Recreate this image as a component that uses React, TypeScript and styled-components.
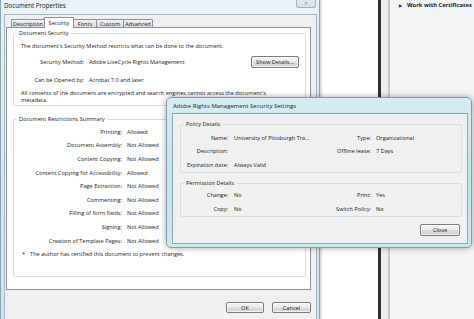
import React from "react";
import styled, { createGlobalStyle } from "styled-components";

const GlobalStyle = createGlobalStyle`
  html, body {
    margin: 0;
    padding: 0;
  }
  body {
    width: 474px;
    height: 319px;
    overflow: hidden;
    font-family: "Open Sans", "Liberation Sans", sans-serif;
    font-size: 5.6px;
    color: #1a1a1a;
  }
`;

const Desktop = styled.div`
  position: relative;
  width: 474px;
  height: 319px;
  overflow: hidden;
  display: flex;
  background: #ffffff;
`;

/* the Acrobat window behind the dialogs */
const PageArea = styled.div`
  flex: 0 0 378px;
  background: #ffffff;
`;

const PageEdge = styled.div`
  flex: 0 0 3px;
  background: #2e2e2e;
`;

const Gutter = styled.div`
  flex: 0 0 7px;
  background: #efefef;
  border-right: 2px solid #c8c8c8;
`;

const SidePanel = styled.div`
  flex: 1;
  background: #f3f3f3;
  padding: 1px 0 0 9px;
`;

const SideItem = styled.div`
  display: flex;
  align-items: center;
  gap: 5px;
  height: 8px;
  font-weight: 700;
  font-size: 5.8px;
  color: #222;
  white-space: nowrap;
`;

const Caret = styled.span`
  font-size: 4px;
  color: #333;
`;

/* Document Properties window */
const PropsWindow = styled.div`
  position: absolute;
  left: 0;
  top: -8px;
  width: 320px;
  height: 330px;
  display: flex;
  flex-direction: column;
  box-sizing: border-box;
  padding: 0 2px 0 3px;
  background: linear-gradient(#eaf2f6, #dce9f0 40%, #cfe4ec);
  border: 1px solid #8aa3b1;
  border-radius: 6px 6px 0 0;
  box-shadow: 1px 0 3px rgba(0, 0, 0, 0.25);
`;

const TitleBar = styled.div`
  flex: 0 0 21px;
  display: flex;
  justify-content: space-between;
`;

const TitleText = styled.span`
  align-self: flex-end;
  padding: 0 0 4px 0;
  font-size: 6.2px;
  color: #222;
`;

const CloseBox = styled.div`
  align-self: flex-start;
  width: 20px;
  height: 15px;
  margin-right: 1px;
  box-sizing: border-box;
  display: flex;
  align-items: flex-end;
  justify-content: center;
  padding-bottom: 1px;
  border: 1px solid #9db2bf;
  border-top: none;
  border-radius: 0 0 3px 3px;
  background: linear-gradient(#e3edf3, #d4e4ec);
  color: #8795a0;
  font-size: 5px;
  line-height: 5px;
`;

const Client = styled.div`
  flex: 1;
  display: flex;
  flex-direction: column;
  background: #f0f0f0;
  border: 1px solid #a5b6c1;
  padding: 2px 5px 0 1px;
`;

const TabStrip = styled.div`
  display: flex;
  align-items: flex-end;
  height: 11px;
  padding-left: 5px;
  position: relative;
  z-index: 1;
  margin-bottom: -1px;
`;

const Tab = styled.div<{ $active?: boolean; $w: number }>`
  width: ${(p) => p.$w}px;
  height: ${(p) => (p.$active ? 11 : 9)}px;
  box-sizing: border-box;
  display: flex;
  align-items: center;
  justify-content: center;
  border: 1px solid #8c9099;
  border-bottom: ${(p) => (p.$active ? "none" : "1px solid #8c9099")};
  margin-right: -1px;
  background: ${(p) =>
    p.$active ? "#ffffff" : "linear-gradient(#f3f3f3, #e6e6e6 50%, #dcdcdc)"};
  border-radius: 1px 1px 0 0;
  padding-bottom: ${(p) => (p.$active ? 1 : 0)}px;
`;

const TabPanel = styled.div`
  height: 263px;
  box-sizing: border-box;
  background: #ffffff;
  border: 1px solid #8c9099;
  padding: 1px 4px 0 6px;
`;

const Group = styled.fieldset<{ $h: number }>`
  margin: 0;
  height: ${(p) => p.$h}px;
  box-sizing: border-box;
  border: 1px solid #d6dee4;
  border-radius: 2px;
  padding: 0;
  min-width: 0;
`;

const Legend = styled.legend`
  margin-left: 3px;
  padding: 0 2px;
  line-height: 8px;
`;

const Line = styled.div<{ $mt?: number }>`
  display: flex;
  align-items: center;
  height: 10px;
  margin-top: ${(p) => p.$mt ?? 0}px;
  padding-left: 7px;
`;

const FieldRow = styled.div<{ $h?: number; $mt?: number; $label: number }>`
  display: grid;
  grid-template-columns: ${(p) => p.$label}px auto 1fr auto;
  align-items: center;
  height: ${(p) => p.$h ?? 10}px;
  margin-top: ${(p) => p.$mt ?? 0}px;
  padding-left: 7px;
`;

const Label = styled.span`
  text-align: right;
  white-space: nowrap;
`;

const Value = styled.span`
  padding-left: 5px;
  white-space: nowrap;
`;

const Para = styled.div`
  margin-top: 5px;
  padding-left: 7px;
  max-width: 248px;
  line-height: 7px;
`;

const Footnote = styled.div`
  display: flex;
  gap: 5px;
  height: 10px;
  align-items: center;
  margin-top: 2px;
  padding-left: 8px;
`;

const Button = styled.div<{ $w: number; $h?: number; $mr?: number }>`
  width: ${(p) => p.$w}px;
  height: ${(p) => p.$h ?? 11}px;
  margin-right: ${(p) => p.$mr ?? 0}px;
  box-sizing: border-box;
  display: flex;
  align-items: center;
  justify-content: center;
  border: 1px solid #7a7a7a;
  border-radius: 2px;
  background: linear-gradient(#f4f4f4, #ebebeb 48%, #dddddd 52%, #d1d1d1);
  box-shadow: inset 0 0 0 1px rgba(255, 255, 255, 0.7);
  white-space: nowrap;
`;

const ButtonBar = styled.div`
  display: flex;
  justify-content: flex-end;
  gap: 8px;
  margin-top: 12px;
`;

const GroupGap = styled.div<{ $h: number }>`
  height: ${(p) => p.$h}px;
`;

/* Rights Management dialog */
const RightsDialog = styled.div`
  position: absolute;
  left: 166px;
  top: 97px;
  width: 306px;
  height: 151px;
  box-sizing: border-box;
  display: flex;
  flex-direction: column;
  padding: 0 3px 3px 5px;
  background: linear-gradient(#d6ecf2, #c3e4ed 50%, #cbe8ef);
  border: 1px solid #7f9eab;
  border-radius: 5px;
  box-shadow: 0 0 6px rgba(0, 0, 0, 0.35);
`;

const DialogTitle = styled.div`
  flex: 0 0 15px;
  display: flex;
  align-items: center;
  padding-left: 1px;
  font-size: 6px;
  color: #222;
`;

const DialogClient = styled.div`
  flex: 1;
  display: flex;
  flex-direction: column;
  background: #f0f0f0;
  border: 1px solid #92a6b0;
  padding: 6px 5px 0 7px;
`;

const DetailGrid = styled.div<{ $rowH: number }>`
  display: grid;
  grid-template-columns: 47px 88px 55px 1fr;
  grid-auto-rows: ${(p) => p.$rowH}px;
  align-items: center;
`;

const DetailValue = styled.span`
  padding-left: 6px;
  white-space: nowrap;
`;

const DialogFooter = styled.div`
  display: flex;
  justify-content: flex-end;
  margin-top: 7px;
  padding-right: 2px;
`;

const restrictions: [string, string][] = [
  ["Printing:", "Allowed"],
  ["Document Assembly:", "Not Allowed"],
  ["Content Copying:", "Not Allowed"],
  ["Content Copying for Accessibility:", "Allowed"],
  ["Page Extraction:", "Not Allowed"],
  ["Commenting:", "Not Allowed"],
  ["Filling of form fields:", "Not Allowed"],
  ["Signing:", "Not Allowed"],
  ["Creation of Template Pages:", "Not Allowed"],
];

const tabs: [string, number][] = [
  ["Description", 34],
  ["Security", 30],
  ["Fonts", 24],
  ["Custom", 28],
  ["Advanced", 30],
];

const App: React.FC = () => {
  return (
    <Desktop>
      <GlobalStyle />
      <PageArea />
      <PageEdge />
      <Gutter />
      <SidePanel>
        <SideItem>
          <Caret>▶</Caret>
          Work with Certificates
        </SideItem>
      </SidePanel>

      <PropsWindow>
        <TitleBar>
          <TitleText>Document Properties</TitleText>
          <CloseBox>✕</CloseBox>
        </TitleBar>
        <Client>
          <TabStrip>
            {tabs.map(([name, w]) => (
              <Tab key={name} $w={w} $active={name === "Security"}>
                {name}
              </Tab>
            ))}
          </TabStrip>
          <TabPanel>
            <Group $h={77}>
              <Legend>Document Security</Legend>
              <Line $mt={4}>
                The document's Security Method restricts what can be done to the
                document.
              </Line>
              <FieldRow $label={63} $h={14} $mt={4}>
                <Label>Security Method:</Label>
                <Value>Adobe LiveCycle Rights Management</Value>
                <span />
                <Button $w={48} $h={12} $mr={6}>
                  Show Details...
                </Button>
              </FieldRow>
              <FieldRow $label={63} $mt={6}>
                <Label>Can be Opened by:</Label>
                <Value>Acrobat 7.0 and later</Value>
              </FieldRow>
              <Para>
                All contents of the document are encrypted and search engines
                cannot access the document's metadata.
              </Para>
            </Group>
            <GroupGap $h={9} />
            <Group $h={162}>
              <Legend>Document Restrictions Summary</Legend>
              <GroupGap $h={2} />
              {restrictions.map(([label, value]) => (
                <FieldRow key={label} $label={101} $h={13.6}>
                  <Label>{label}</Label>
                  <Value>{value}</Value>
                </FieldRow>
              ))}
              <Footnote>
                <span>*</span>
                The author has certified this document to prevent changes.
              </Footnote>
            </Group>
          </TabPanel>
          <ButtonBar>
            <Button $w={38}>OK</Button>
            <Button $w={39}>Cancel</Button>
          </ButtonBar>
        </Client>
      </PropsWindow>

      <RightsDialog>
        <DialogTitle>Adobe Rights Management Security Settings</DialogTitle>
        <DialogClient>
          <Group $h={53}>
            <Legend>Policy Details</Legend>
            <GroupGap $h={3} />
            <DetailGrid $rowH={13.5}>
              <Label>Name:</Label>
              <DetailValue>University of Pittsburgh Tra...</DetailValue>
              <Label>Type:</Label>
              <Value>Organizational</Value>
              <Label>Description:</Label>
              <DetailValue />
              <Label>Offline lease:</Label>
              <Value>7 Days</Value>
              <Label>Expiration date:</Label>
              <DetailValue>Always Valid</DetailValue>
            </DetailGrid>
          </Group>
          <GroupGap $h={6} />
          <Group $h={38}>
            <Legend>Permission Details</Legend>
            <GroupGap $h={1} />
            <DetailGrid $rowH={14}>
              <Label>Change:</Label>
              <DetailValue>No</DetailValue>
              <Label>Print:</Label>
              <Value>Yes</Value>
              <Label>Copy:</Label>
              <DetailValue>No</DetailValue>
              <Label>Switch Policy:</Label>
              <Value>No</Value>
            </DetailGrid>
          </Group>
          <DialogFooter>
            <Button $w={40} $h={12}>
              Close
            </Button>
          </DialogFooter>
        </DialogClient>
      </RightsDialog>
    </Desktop>
  );
};

export default App;
